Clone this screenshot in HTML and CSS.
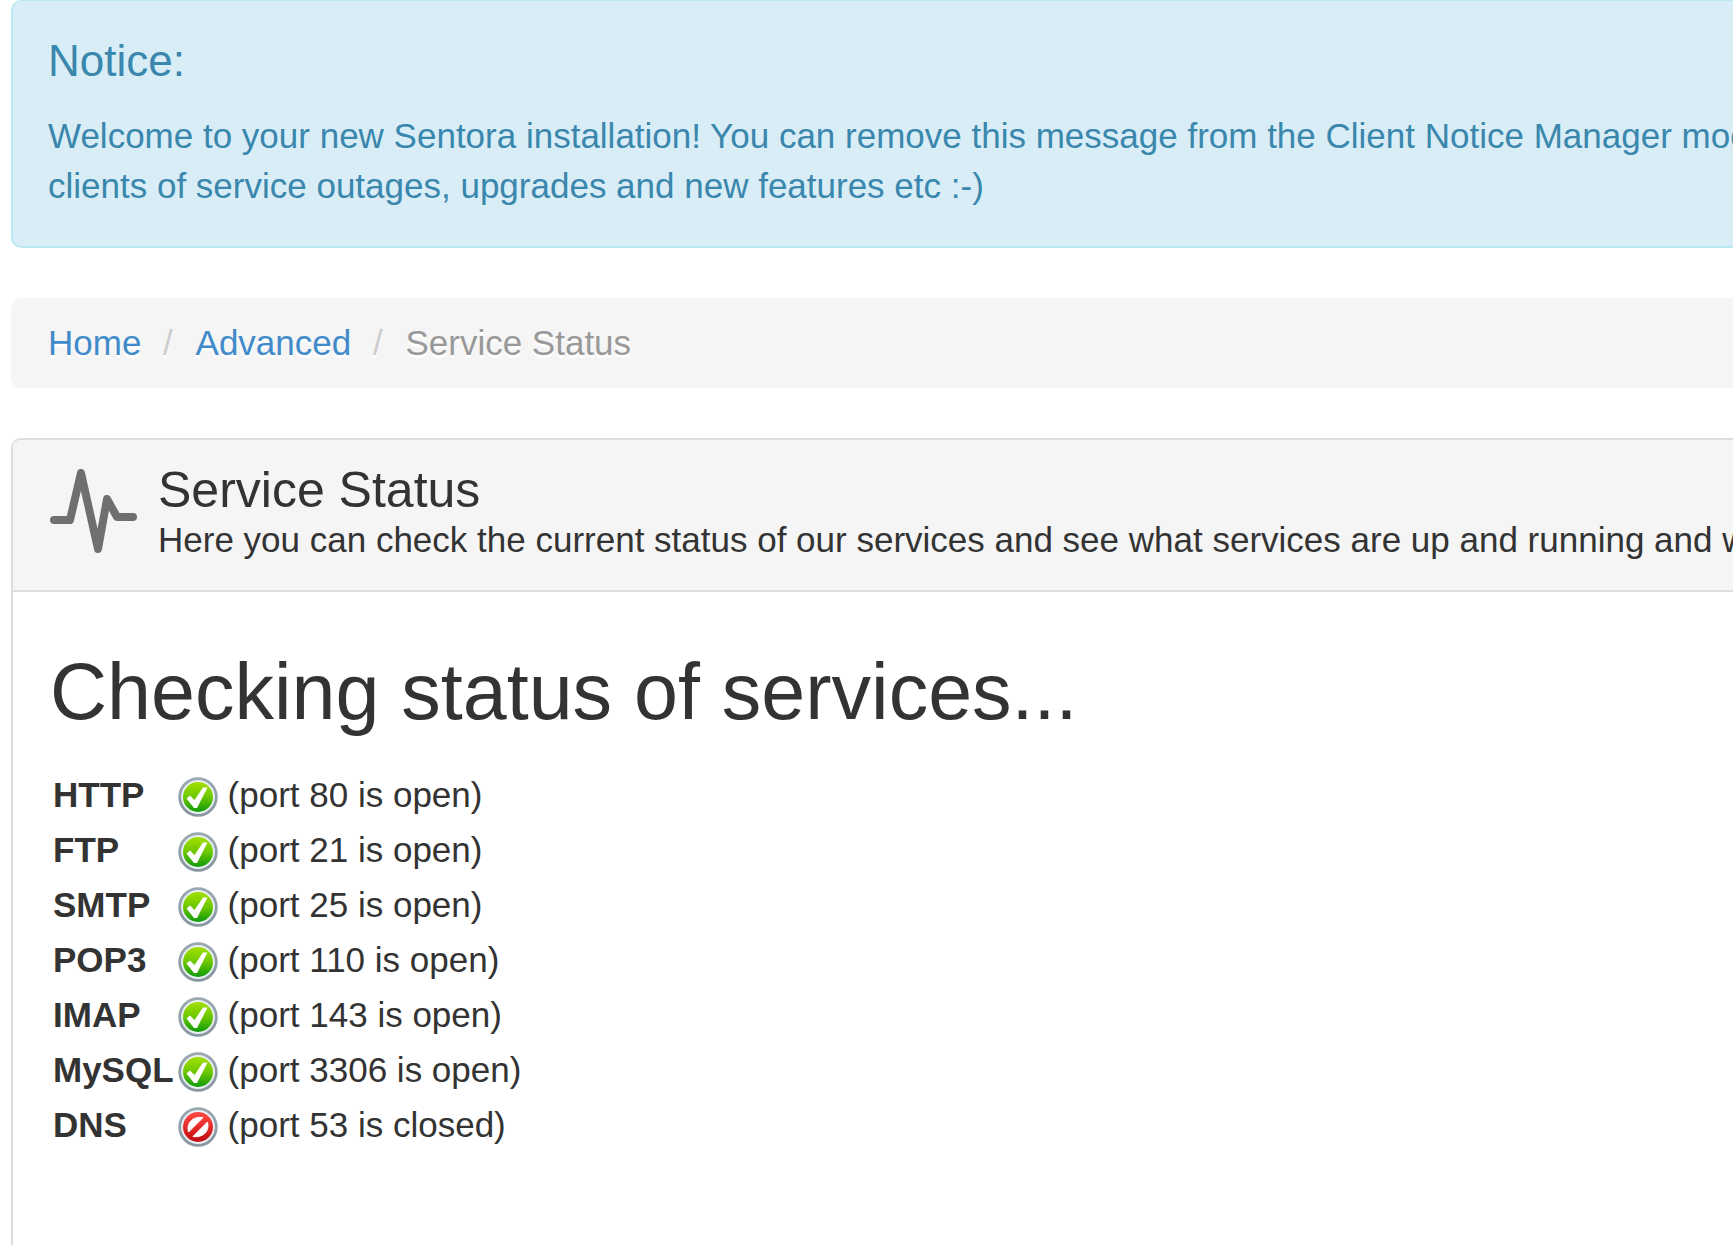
FILE: index.html
```
<!DOCTYPE html>
<html lang="en">
	<head>
		<meta charset="utf-8" />
		<title>Service Status</title>
		<link rel="stylesheet" href="styles.css">
	</head>
	<body>
		<!-- shared status icons -->
		<svg class="sprite" aria-hidden="true">
			<defs>
				<linearGradient id="ring" x1="0" y1="0" x2="0" y2="1">
					<stop offset="0" stop-color="#9aa8b1"/>
					<stop offset="1" stop-color="#8796a0"/>
				</linearGradient>
				<linearGradient id="green" x1="0" y1="0" x2="0" y2="1">
					<stop offset="0" stop-color="#a4e000"/>
					<stop offset="0.5" stop-color="#6cc800"/>
					<stop offset="1" stop-color="#0f9a0c"/>
				</linearGradient>
				<linearGradient id="red" x1="0" y1="0" x2="0" y2="1">
					<stop offset="0" stop-color="#ff4a44"/>
					<stop offset="0.5" stop-color="#e52a2a"/>
					<stop offset="1" stop-color="#bd0c10"/>
				</linearGradient>
			</defs>
			<symbol id="icon-up" viewBox="0 0 40 40">
				<circle cx="20" cy="20" r="18.3" fill="#e9eff3" stroke="url(#ring)" stroke-width="2.8"/>
				<circle cx="20" cy="20" r="15" fill="url(#green)"/>
				<path d="M8.5 21.5 L12 18.5 L16.5 23 L25 10.5 L29.5 10.5 L19 31 L16 31 Z" fill="#fff"/>
			</symbol>
			<symbol id="icon-down" viewBox="0 0 40 40">
				<circle cx="20" cy="20" r="18.3" fill="#e9eff3" stroke="url(#ring)" stroke-width="2.8"/>
				<circle cx="20" cy="20" r="15" fill="url(#red)"/>
				<path d="M10.5 25 C8 16 15 9 25 10.5 Z" fill="#fff" stroke="#fff" stroke-width="1" stroke-linejoin="round"/>
				<path d="M29.5 15 C32 24 25 31 15 29.5 Z" fill="#fff" stroke="#fff" stroke-width="1" stroke-linejoin="round"/>
			</symbol>
		</svg>

		<div class="container">
			<div class="alert">
				<h4>Notice:</h4>
				<p>Welcome to your new Sentora installation! You can remove this message from the Client Notice Manager module<br/>clients of service outages, upgrades and new features etc :-)</p>
			</div>

			<ul class="breadcrumb">
				<li><a href="#">Home</a></li>
				<li><a href="#">Advanced</a></li>
				<li class="active">Service Status</li>
			</ul>

			<div class="panel">
				<div class="panel-heading">
					<svg class="module-icon" viewBox="0 0 88 90" aria-hidden="true">
						<polyline points="4,55 20,55 31,8 48,84 57,34 67,52 83,52"/>
					</svg>
					<div>
						<h3>Service Status</h3>
						<p>Here you can check the current status of our services and see what services are up and running and which</p>
					</div>
				</div>
				<div class="panel-body">
					<h2>Checking status of services...</h2>
					<table class="services">
						<tr>
							<th scope="row">HTTP</th>
							<td class="state"><svg class="status" role="img" aria-label="Up"><use href="#icon-up"/></svg></td>
							<td class="port">(port 80 is open)</td>
						</tr>
						<tr>
							<th scope="row">FTP</th>
							<td class="state"><svg class="status" role="img" aria-label="Up"><use href="#icon-up"/></svg></td>
							<td class="port">(port 21 is open)</td>
						</tr>
						<tr>
							<th scope="row">SMTP</th>
							<td class="state"><svg class="status" role="img" aria-label="Up"><use href="#icon-up"/></svg></td>
							<td class="port">(port 25 is open)</td>
						</tr>
						<tr>
							<th scope="row">POP3</th>
							<td class="state"><svg class="status" role="img" aria-label="Up"><use href="#icon-up"/></svg></td>
							<td class="port">(port 110 is open)</td>
						</tr>
						<tr>
							<th scope="row">IMAP</th>
							<td class="state"><svg class="status" role="img" aria-label="Up"><use href="#icon-up"/></svg></td>
							<td class="port">(port 143 is open)</td>
						</tr>
						<tr>
							<th scope="row">MySQL</th>
							<td class="state"><svg class="status" role="img" aria-label="Up"><use href="#icon-up"/></svg></td>
							<td class="port">(port 3306 is open)</td>
						</tr>
						<tr>
							<th scope="row">DNS</th>
							<td class="state"><svg class="status" role="img" aria-label="Down"><use href="#icon-down"/></svg></td>
							<td class="port">(port 53 is closed)</td>
						</tr>
					</table>
				</div>
			</div>
		</div>
	</body>
</html>
```
FILE: styles.css
```
*
{
	box-sizing: border-box;
}

body
{
	background: #ffffff;
	margin: 0;
	color: #333333;
	font-family: "Liberation Sans", Arial, sans-serif;
	font-size: 35px;
	line-height: 50px;
}

h2,
h3,
h4,
p
{
	margin: 0;
	font-weight: normal;
}

a
{
	color: #428bca;
	text-decoration: none;
}

a:hover
{
	text-decoration: underline;
}

.sprite
{
	display: block;
	width: 0;
	height: 0;
}

/* the boxes run off the right edge of the window */
.container
{
	display: flex;
	flex-direction: column;
	gap: 50px;
	height: 100vh;
	padding-left: 11px;
	overflow: hidden;
	white-space: nowrap;
}

.alert
{
	flex: none;
	padding: 35px 0 35px 35px;
	color: #3a87ad;
	background: #d9edf7;
	border: 2px solid #bce8f1;
	border-top-width: 1px;
	border-right: none;
	border-radius: 10px 0 0 10px;
	overflow: hidden;
}

.alert h4
{
	margin-bottom: 25px;
	font-size: 44px;
}

.breadcrumb
{
	flex: none;
	margin: 0;
	padding: 20px 0 20px 37px;
	list-style: none;
	background: #f5f5f5;
	border-radius: 10px 0 0 10px;
}

.breadcrumb li
{
	display: inline-block;
	text-shadow: 0 3px 0 #ffffff;
}

.breadcrumb li + li:before
{
	content: "/\00a0";
	padding: 0 13px 0 12px;
	color: #cccccc;
}

.breadcrumb .active
{
	color: #999999;
}

.panel
{
	flex: 1 0 auto;
	border: 2px solid #dddddd;
	border-right: none;
	border-bottom: none;
	border-radius: 10px 0 0 0;
	overflow: hidden;
}

.panel-heading
{
	display: flex;
	gap: 20px;
	padding: 25px 0 25px 37px;
	background: #f5f5f5;
	border-bottom: 2px solid #dddddd;
}

.panel-heading h3
{
	font-size: 50px;
}

.module-icon
{
	flex: none;
	width: 88px;
	height: 90px;
	fill: none;
	stroke: #6d6f71;
	stroke-width: 8px;
	stroke-linecap: round;
	stroke-linejoin: round;
}

.panel-body
{
	padding: 56px 37px;
}

.panel-body h2
{
	margin-bottom: 32px;
	font-size: 79px;
	line-height: 88px;
}

.services
{
	border-collapse: collapse;
}

.services th,
.services td
{
	padding: 2px 2px 3px 3px;
	text-align: left;
}

.services .state
{
	padding: 9px 2px 6px;
	vertical-align: top;
}

.services .port
{
	padding-left: 8px;
}

.status
{
	display: block;
	width: 40px;
	height: 40px;
}
```
